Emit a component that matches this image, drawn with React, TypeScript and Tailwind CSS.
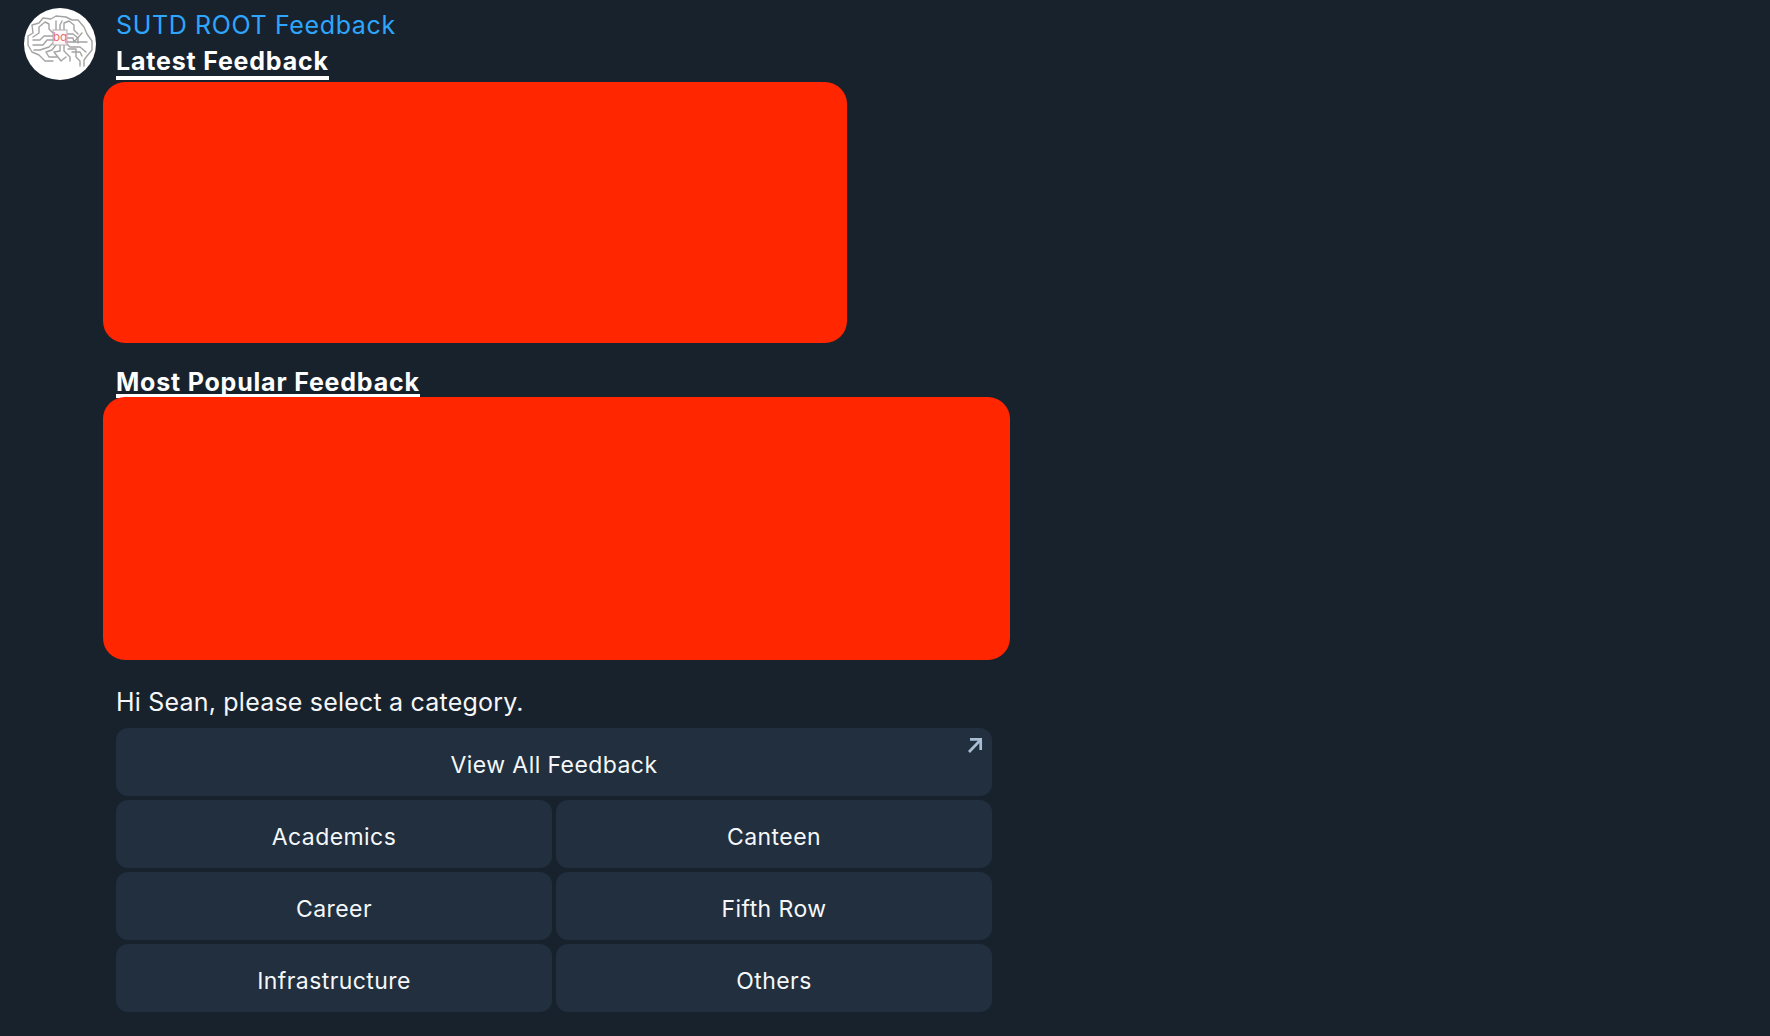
const categories = ["Academics", "Canteen", "Career", "Fifth Row", "Infrastructure", "Others"];

function BrainLogo() {
  return (
    <svg viewBox="0 0 72 72" className="w-[72px] h-[72px] shrink-0 rounded-full bg-white">
      <g fill="none" stroke="#a3a3a3" strokeWidth="1.4" strokeLinecap="round" strokeLinejoin="round">
        <path d="M29 53 L21 53 L15 47 L8 44 L4 37 L4 28 L9 25 L8 17 L15 15 L19 10 L27 11 L32 8 L42 9 L48 12 L54 12 L60 19 L63 26 L68 33 L68 42 L63 48 L60 52 L60 58" />
        <path d="M29 25 L25 21 L25 16 L21 14 L15 19 L15 25 L9 29" />
        <path d="M32 22 L32 13" />
        <path d="M36 22 L36 17 L38 13" />
        <path d="M40 22 L40 15 L45 13 L50 17 L50 22 L54 26" />
        <path d="M29 28 L20 28 L16 32 L9 32" />
        <path d="M29 32 L23 32 L19 37 L9 37" />
        <path d="M29 35 L25 39 L16 42 L10 42" />
        <path d="M43 26 L49 26 L54 30 L54 35" />
        <path d="M43 30 L49 30 L50 34 L58 25" />
        <path d="M43 34 L63 34" />
        <path d="M43 36 L46 39 L56 39 L62 44" />
        <path d="M32 37 L28 42 L22 44 L25 49 L33 49" />
        <path d="M36 37 L36 43 L30 44 L37 53 L42 49" />
        <path d="M40 37 L40 43 L46 49 L46 53" />
        <path d="M44 41 L52 41 L52 49 L56 53 L56 58" />
        <path d="M48 44 L56 44 L58 48" />
      </g>
      <rect x="29" y="22" width="14" height="15" fill="#fdf7f7" stroke="#b0b0b0" strokeWidth="1" />
      <text x="36" y="33" textAnchor="middle" fontSize="12" fill="#e77072" fontFamily="Inter, sans-serif">bq</text>
    </svg>
  );
}

function ArrowIcon() {
  return (
    <svg viewBox="0 0 16 16" className="absolute top-[9px] right-[8px] w-4 h-4 text-[#a9bdd3]" fill="none" stroke="currentColor" strokeWidth="2.7">
      <path d="M1 15 L12 3.5" />
      <path d="M2 2.4 H12.7 V13" />
    </svg>
  );
}

function KeyButton({ label, children }: { label: string; children?: React.ReactNode }) {
  return (
    <button className="relative h-[68px] pt-[6px] rounded-xl bg-[#212f3f] text-[23px] text-[#f5f7f9] tracking-[0.42px] font-normal">
      {label}
      {children}
    </button>
  );
}

export default function App() {
  return (
    <div className="min-h-[1036px] bg-[#18222d] pt-2 pl-6 flex gap-[7px] font-['Inter',sans-serif] overflow-hidden">
      <BrainLogo />
      <div className="flex flex-col w-[907px]">
        <p className="pl-[13px] h-[33px] pt-[1px] text-[25px] tracking-[0.63px] leading-[33px] text-[#2ea6ff]">SUTD ROOT Feedback</p>
        <h2 className="pl-[13px] h-[41px] text-[25px] tracking-[0.8px] leading-[40px] font-bold text-white">
          <span className="border-b-4 border-white inline-block h-[35px] leading-[33px]">Latest Feedback</span>
        </h2>
        <div className="w-[744px] h-[261px] rounded-[22px] bg-[#ff2600]" />
        <h2 className="pl-[13px] mt-[21px] h-[33px] text-[25px] tracking-[0.8px] font-bold text-white">
          <span className="border-b-4 border-white inline-block h-[32px] leading-[33px]">Most Popular Feedback</span>
        </h2>
        <div className="w-[907px] h-[263px] rounded-[22px] bg-[#ff2600]" />
        <p className="pl-[13px] mt-[25px] h-[34px] text-[25px] tracking-[0.2px] leading-[34px] text-[#f5f7f9]">Hi Sean, please select a category.</p>
        <div className="ml-[13px] mt-[9px] w-[876px] grid grid-cols-2 gap-1">
          <div className="col-span-2 grid">
            <KeyButton label="View All Feedback">
              <ArrowIcon />
            </KeyButton>
          </div>
          {categories.map((c) => (
            <KeyButton key={c} label={c} />
          ))}
        </div>
      </div>
    </div>
  );
}
